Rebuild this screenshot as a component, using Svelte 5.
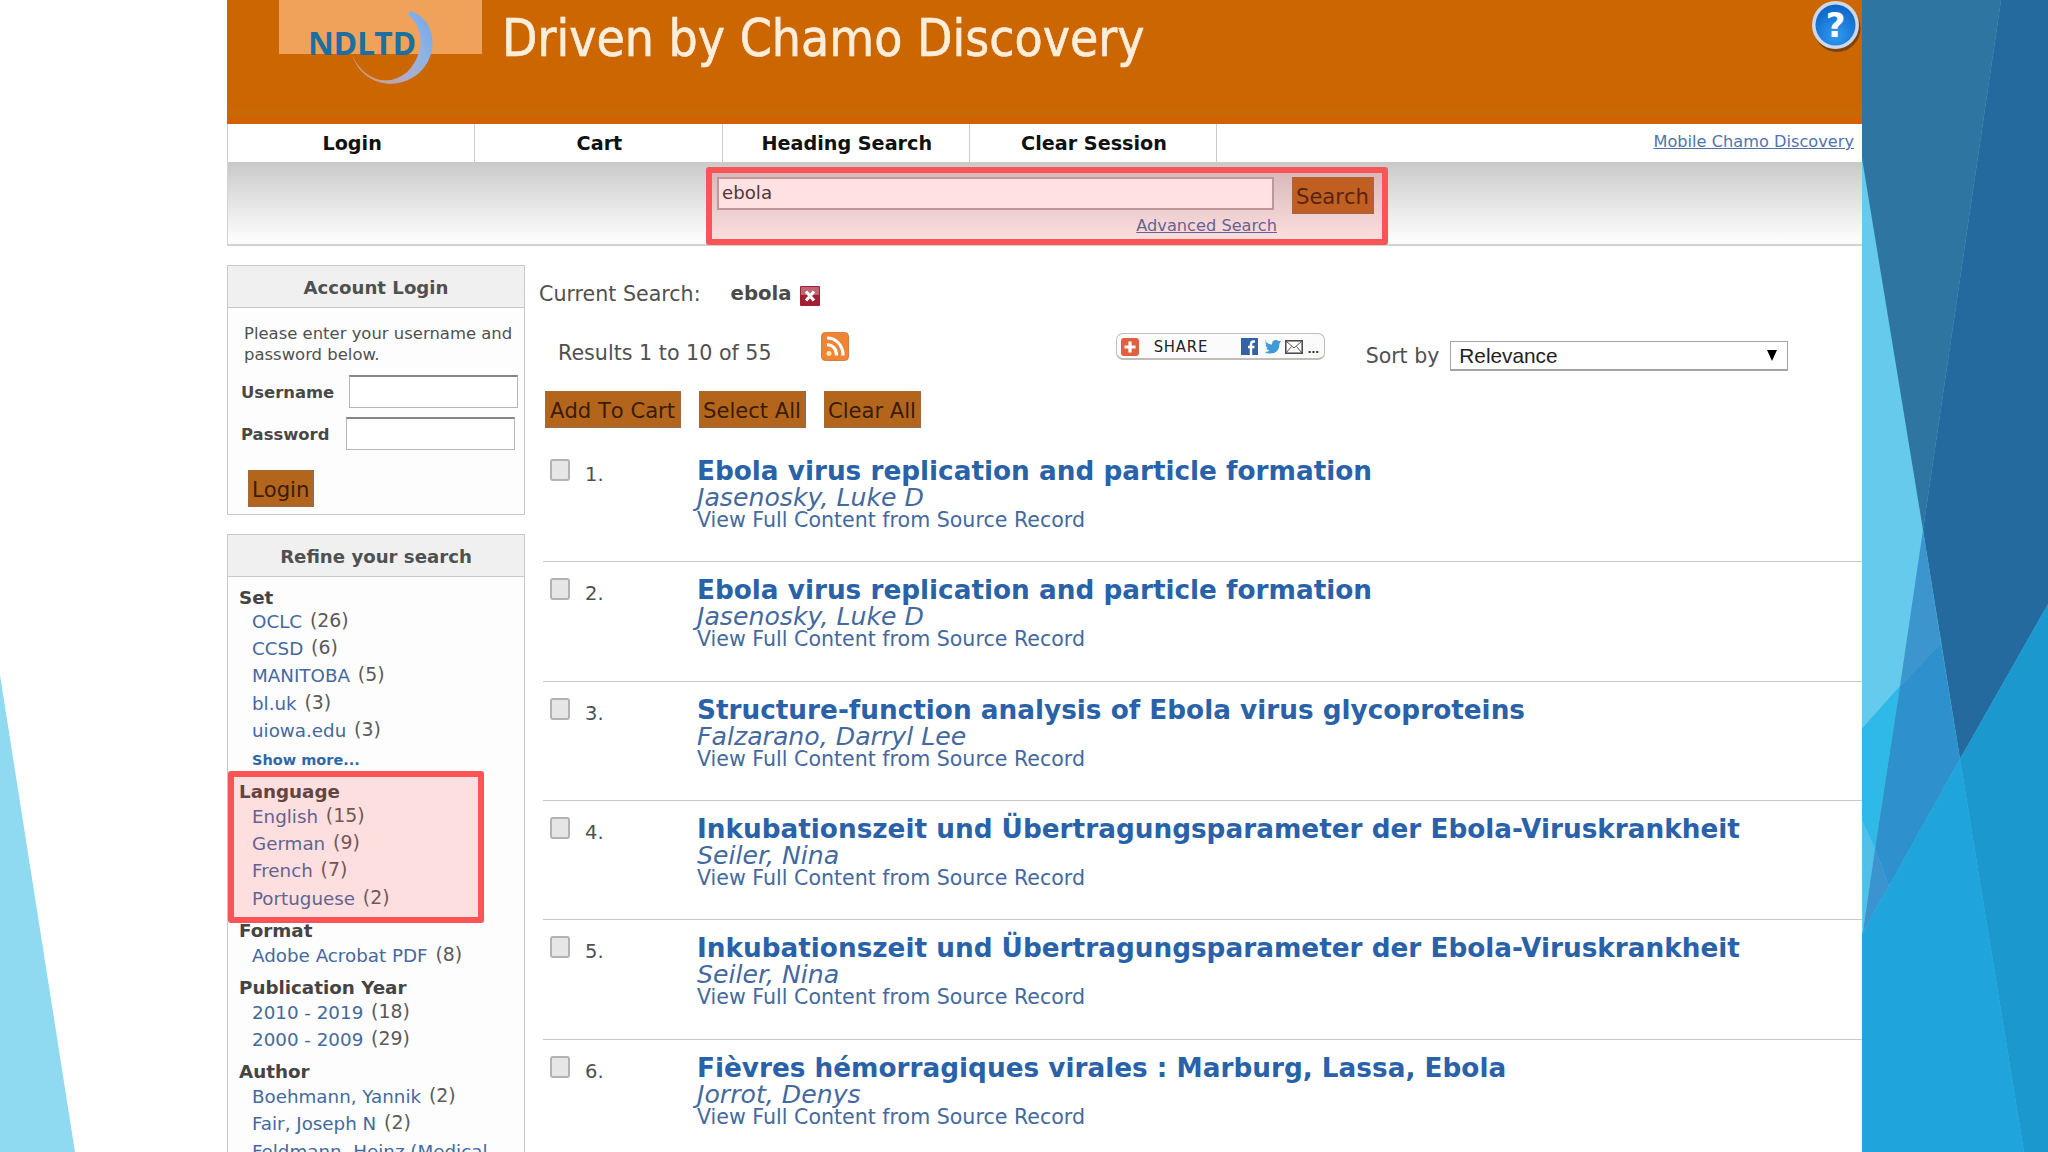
<script>
    const navItems = ['Login', 'Cart', 'Heading Search', 'Clear Session'];

    const facets = [
        {
            name: 'Set',
            more: true,
            values: [['OCLC', 26], ['CCSD', 6], ['MANITOBA', 5], ['bl.uk', 3], ['uiowa.edu', 3]]
        },
        {
            name: 'Language',
            values: [['English', 15], ['German', 9], ['French', 7], ['Portuguese', 2]]
        },
        { name: 'Format', values: [['Adobe Acrobat PDF', 8]] },
        { name: 'Publication Year', values: [['2010 - 2019', 18], ['2000 - 2009', 29]] },
        {
            name: 'Author',
            values: [['Boehmann, Yannik', 2], ['Fair, Joseph N', 2], ['Feldmann, Heinz (Medical', null]]
        }
    ];

    const results = [
        { title: 'Ebola virus replication and particle formation', author: 'Jasenosky, Luke D' },
        { title: 'Ebola virus replication and particle formation', author: 'Jasenosky, Luke D' },
        { title: 'Structure-function analysis of Ebola virus glycoproteins', author: 'Falzarano, Darryl Lee' },
        { title: 'Inkubationszeit und Übertragungsparameter der Ebola-Viruskrankheit', author: 'Seiler, Nina' },
        { title: 'Inkubationszeit und Übertragungsparameter der Ebola-Viruskrankheit', author: 'Seiler, Nina' },
        { title: 'Fièvres hémorragiques virales : Marburg, Lassa, Ebola', author: 'Jorrot, Denys' }
    ];

    let query = 'ebola';
</script>

<div class="slide">
    <svg class="backdrop" viewBox="0 0 2048 1152" aria-hidden="true">
        <path d="M0 675L75 1152H0z" fill="#8fdaf1" />
        <path d="M1862 0h186v1152h-186z" fill="#66caec" />
        <path d="M1862 0H2001L1923 530L1862 158z" fill="#2f75a1" />
        <path d="M2001 0H2048V604L1960 759L1923 530z" fill="#256a9f" />
        <path d="M1862 728.5L1900 686L1875 849L1862 820z" fill="#2fb9e8" />
        <path d="M1862 820L1875 849L1863 932z" fill="#50c0e8" />
        <path d="M1923 530L1941 643L1900 686z" fill="#3c95cd" />
        <path d="M1900 686L1941 643L1960 759L1889 886L1875 849z" fill="#2e91cd" />
        <path d="M1875 849L1889 886L1863 932z" fill="#3b93d0" />
        <path d="M1862 934L1960 759L2024 1152H1862z" fill="#1fa4dc" />
        <path d="M1960 759L2048 604V1152H2024z" fill="#1b98cd" />
    </svg>

    <div class="site">
        <header>
            <svg class="logo" width="277" height="124" viewBox="0 0 277 124">
                <defs>
                    <linearGradient id="swoosh" x1="0" y1=".8" x2="1" y2=".3">
                        <stop offset="0" stop-color="#d09a78" />
                        <stop offset=".45" stop-color="#b3abc6" />
                        <stop offset=".8" stop-color="#8db4e6" />
                        <stop offset="1" stop-color="#7aaae6" />
                    </linearGradient>
                </defs>
                <rect x="52" width="203" height="54" fill="#f0a25b" />
                <path d="M183 11C209 19 212 52 195 70C175 92 136 88 125 55C138 83 165 88 183 69C197 52 198 29 181 15z" fill="url(#swoosh)" />
                <text x="81" y="54.500" textLength="108" lengthAdjust="spacingAndGlyphs">NDLTD</text>
            </svg>
            <h1>Driven by Chamo Discovery</h1>
            <svg class="help" width="50" height="54" viewBox="0 0 50 54">
                <defs>
                    <radialGradient id="ball" cx=".5" cy=".75" r=".8">
                        <stop offset="0" stop-color="#2f9cf0" />
                        <stop offset="1" stop-color="#0b5fc4" />
                    </radialGradient>
                </defs>
                <ellipse cx="26" cy="28" rx="23.500" ry="24" fill="#5a3416" opacity=".7" />
                <ellipse cx="24.500" cy="25" rx="23.500" ry="24" fill="#cfd8ea" />
                <ellipse cx="24.500" cy="25" rx="20" ry="20.500" fill="url(#ball)" />
                <text x="24.500" y="37">?</text>
            </svg>
        </header>

        <nav>
            {#each navItems as item}
                <a href="#top">{item}</a>
            {/each}
            <a class="mobile" href="#top">Mobile Chamo Discovery</a>
        </nav>

        <div class="searchbar">
            <form>
                <div class="field">
                    <input type="text" bind:value={query} aria-label="Search terms">
                    <a href="#top">Advanced Search</a>
                </div>
                <button type="button" class="btn">Search</button>
            </form>
            <div class="mark mark-search"></div>
        </div>

        <div class="content">
            <aside>
                <section class="box login">
                    <h2>Account Login</h2>
                    <p>Please enter your username and password below.</p>
                    <label>Username <input type="text"></label>
                    <label>Password <input type="password"></label>
                    <button type="button" class="btn">Login</button>
                </section>

                <section class="box refine">
                    <h2>Refine your search</h2>
                    {#each facets as facet}
                        <h3>{facet.name}</h3>
                        <ul>
                            {#each facet.values as [label, count]}
                                <li><a href="#top">{label}</a>{#if count}&nbsp;<span>({count})</span>{/if}</li>
                            {/each}
                        </ul>
                        {#if facet.more}
                            <a class="more" href="#top">Show more...</a>
                        {/if}
                    {/each}
                    <div class="mark mark-language"></div>
                </section>
            </aside>

            <main>
                <div class="current">
                    <span>Current Search:</span>
                    <b>ebola</b>
                    <svg width="20" height="20" viewBox="0 0 20 20">
                        <rect width="20" height="20" rx="1" fill="#a31f33" />
                        <rect x="1" y="1" width="18" height="8" fill="#bd6571" />
                        <path d="M6 5.500l8 9M14 5.500l-8 9" stroke="#fff" stroke-width="3.200" />
                    </svg>
                </div>

                <div class="toolbar">
                    <span class="count">Results 1 to 10 of 55</span>
                    <svg class="rss" width="28" height="29" viewBox="0 0 28 31" preserveAspectRatio="none">
                        <rect x=".5" y=".5" width="27" height="30" rx="4" fill="#ee8434" stroke="#d9783a" />
                        <g fill="none" stroke="#fff" stroke-width="3.200">
                            <path d="M6 6.500C15 6.500 22 14 22 25" />
                            <path d="M6 13.500C11.500 13.500 15.500 18 15.500 25" />
                        </g>
                        <ellipse cx="8" cy="23" rx="2.500" ry="2.700" fill="#ffe9a8" />
                    </svg>
                    <div class="share">
                        <svg width="18" height="18" viewBox="0 0 18 18">
                            <rect width="18" height="18" rx="3" fill="#e2603f" />
                            <path d="M9 3.500v11M3.500 9h11" stroke="#fff" stroke-width="3.200" />
                        </svg>
                        <span>SHARE</span>
                        <svg class="networks" width="64" height="18" viewBox="0 0 64 18">
                            <rect width="17" height="17" fill="#3463a5" />
                            <path d="M14 3.500h-1.500q-2.500 0-2.500 2.800V17M7 9h6.500" fill="none" stroke="#fff" stroke-width="2.400" />
                            <path d="M23.500 2.500q3.500 4 7.500 4q0-4.500 4-4.500q1.500 0 2.500 1h2.500l-1.500 2.500q0 10-9.500 10q-3.500 0-5.500-1.500q3.500 0 5-1.500q-2.500-.5-3-2.500h1.500q-2.500-1-2.500-3.500l1.200.4q-2.200-2-.7-4.400z" fill="#3f9bd6" />
                            <rect x="44.800" y="2.800" width="16.400" height="12.400" fill="#fff" stroke="#444" stroke-width="1.500" />
                            <path d="M45 3l8 7l8-7M45 15l5.500-6.500M61 15l-5.500-6.500" fill="none" stroke="#555" />
                        </svg>
                        <i>...</i>
                    </div>
                    <span class="sort">Sort by</span>
                    <div class="select">
                        Relevance
                        <svg width="10" height="11" viewBox="0 0 10 11"><path d="M0 0h10L5 11z" /></svg>
                    </div>
                </div>

                <div class="actions">
                    <button type="button" class="btn">Add To Cart</button>
                    <button type="button" class="btn">Select All</button>
                    <button type="button" class="btn">Clear All</button>
                </div>

                <ol>
                    {#each results as result, i}
                        <li>
                            <span class="check"></span>
                            <span class="num">{i + 1}.</span>
                            <div class="record">
                                <a class="title" href="#top">{result.title}</a>
                                <a class="author" href="#top">{result.author}</a>
                                <a class="source" href="#top">View Full Content from Source Record</a>
                            </div>
                        </li>
                    {/each}
                </ol>
            </main>
        </div>
    </div>
</div>

<style>
    :global(body) {
        margin: 0;
        overflow: hidden;
    }

    .slide {
        position: relative;
        width: 2048px;
        height: 1152px;
        overflow: hidden;
        background: #fff;
        color: #505050;
        font-family: "DejaVu Sans", Verdana, sans-serif;
    }

    .slide * {
        box-sizing: border-box;
    }

    .backdrop {
        position: absolute;
        inset: 0;
    }

    .site {
        position: relative;
        width: 1635px;
        height: 1152px;
        margin-left: 227px;
        display: flex;
        flex-direction: column;
    }

    a {
        color: #44699f;
        text-decoration: none;
    }

    h1, h2, h3, p, ul, ol {
        margin: 0;
        padding: 0;
        list-style: none;
    }

    header {
        display: flex;
        height: 124px;
        flex: none;
        background: linear-gradient(#cc6600 110px, #c66a08 111px, #c66a08 115px, #d26200 117px);
    }

    .logo text {
        font: bold 33px "Noto Sans", "Open Sans", sans-serif;
        fill: #1d6f9f;
    }

    h1 {
        flex: 1;
        margin-left: -2px;
        font: 51.200px/77px "DejaVu Sans Condensed", "DejaVu Sans", sans-serif;
        color: #fdeedb;
        -webkit-text-stroke: .6px #fdeedb;
        white-space: nowrap;
    }

    .help {
        margin-right: 1px;
    }

    .help text {
        font: bold 34px "DejaVu Sans", sans-serif;
        fill: #fff;
        text-anchor: middle;
    }

    nav {
        display: flex;
        flex: none;
        height: 38px;
        background: #fff;
        border-left: 1px solid #ccc;
    }

    nav a {
        width: 247.300px;
        padding-left: 2px;
        border-right: 1px solid #ccc;
        color: #111;
        font-size: 19.200px;
        font-weight: bold;
        line-height: 39px;
        text-align: center;
    }

    nav a.mobile {
        flex: 1;
        border: 0;
        padding-right: 8px;
        color: #5272ae;
        font-size: 16.200px;
        font-weight: normal;
        line-height: 35px;
        text-align: right;
        text-decoration: underline;
    }

    .searchbar {
        position: relative;
        flex: none;
        height: 84px;
        padding: 15px 0 0 489px;
        background: linear-gradient(#c9c9c9, #d0d0d0 12%, #fbfbfb 92%);
        border: solid #d2d2d2;
        border-width: 0 0 2px 1px;
    }

    form {
        display: flex;
        gap: 18px;
    }

    .field {
        width: 557px;
        display: flex;
        flex-direction: column;
    }

    .field input {
        height: 33px;
        padding: 0 3px 3px;
        border: 2px solid #b0a8a8;
        background: #fff;
        color: #333;
        font: 18.200px "DejaVu Sans", sans-serif;
    }

    .field a {
        align-self: flex-end;
        margin-right: -3px;
        font-size: 16.200px;
        line-height: 32px;
        color: #4a68a4;
        text-decoration: underline;
    }

    .btn {
        flex: none;
        height: 37px;
        padding: 2px 3px 0;
        border: 1px solid #a2683a;
        border-width: 1px 2px 2px 1px;
        background: #b3651b;
        color: #3a1c08;
        font: 21.100px/34px "DejaVu Sans", sans-serif;
        font-kerning: none;
        white-space: nowrap;
    }

    .mark {
        position: absolute;
        border: 6px solid #fb5457;
        border-radius: 3px;
        background: rgba(255, 70, 70, .16);
    }

    .mark-search {
        left: 478px;
        top: 5px;
        width: 682px;
        height: 78px;
    }

    .mark-language {
        left: 0;
        top: 236px;
        width: 256px;
        height: 152px;
    }

    .content {
        flex: 1;
        min-height: 0;
        display: flex;
    }

    aside {
        width: 298px;
        padding-top: 19px;
        display: flex;
        flex-direction: column;
        gap: 19px;
    }

    .box {
        border: 1px solid #c8c8c8;
        background: #fdfdfd;
    }

    .box h2 {
        height: 42px;
        border-bottom: 1px solid #c8c8c8;
        background: #f0f0f0;
        color: #505050;
        font-size: 18.150px;
        line-height: 44px;
        text-align: center;
    }

    .login {
        flex: none;
        height: 250px;
    }

    .login p {
        margin: 16px 0 8px;
        padding-left: 16px;
        font-size: 16.450px;
        line-height: 20.500px;
    }

    .login label {
        display: flex;
        gap: 15px;
        height: 42px;
        padding: 2px 0 0 13px;
        font-size: 16.400px;
        font-weight: bold;
        line-height: 35px;
        color: #484848;
    }

    .login label + label {
        gap: 17px;
    }

    .login input {
        width: 169px;
        height: 33px;
        border: 1px solid #b5b5b5;
        border-top: 2px solid #858585;
        background: #fff;
    }

    .login .btn {
        margin: 13px 0 0 20px;
    }

    .refine {
        position: relative;
        flex: 1;
        min-height: 0;
        border-bottom: 0;
    }

    .refine h3 {
        margin: 6.700px 0 -1.200px;
        padding-left: 11px;
        color: #444;
        font-size: 18.300px;
        line-height: 24px;
    }

    .refine h2 + h3 {
        margin: 9px 0 -2.500px;
    }

    .refine li {
        padding-left: 24px;
        font-size: 18.300px;
        line-height: 27.400px;
        white-space: nowrap;
    }

    .refine span {
        position: relative;
        top: -1px;
        margin-left: 2px;
        font-size: 18.900px;
        line-height: 20px;
        color: #5a5a5a;
    }

    .more {
        display: block;
        margin: 2px 0 -.500px;
        padding-left: 24px;
        color: #2f68a8;
        font-size: 14.500px;
        font-weight: bold;
        line-height: 27px;
    }

    main {
        flex: 1;
        padding: 28px 0 0 14px;
    }

    .current {
        display: flex;
        height: 40px;
        font-size: 20.600px;
        line-height: 40px;
    }

    .current b {
        margin: 0 8px 0 30px;
        font-size: 19.700px;
        color: #4a4a4a;
    }

    .current svg {
        margin-top: 12px;
    }

    .toolbar {
        display: flex;
        height: 60px;
        padding-left: 19px;
        font-size: 20.650px;
    }

    .count {
        margin-top: 25px;
        line-height: 28px;
    }

    .rss {
        margin: 18px 0 0 49px;
    }

    .share {
        display: flex;
        align-items: flex-start;
        width: 209px;
        height: 27px;
        margin: 19px 0 0 267px;
        padding: 4px 0 0 4px;
        border: 1px solid #c0bdb8;
        border-bottom-width: 2px;
        border-radius: 7px;
        background: #fbfbfb;
        color: #222;
    }

    .share span {
        margin-left: 15px;
        font: 16.500px/18px "DejaVu Sans Condensed", "DejaVu Sans", sans-serif;
        letter-spacing: .8px;
    }

    .networks {
        margin-left: auto;
    }

    .share i {
        width: 19px;
        padding-left: 3px;
        font: bold 10px/23px "DejaVu Sans", sans-serif;
    }

    .sort {
        margin: 28px 11px 0 41px;
        font-size: 20.500px;
        line-height: 29px;
    }

    .select {
        display: flex;
        align-items: center;
        justify-content: space-between;
        width: 338px;
        height: 30px;
        margin-top: 27px;
        padding: 0 10px 0 8px;
        border: 1px solid #a4a4a4;
        border-bottom-width: 2px;
        background: #fff;
        color: #222;
        font: 20.800px "Liberation Sans", Arial, sans-serif;
    }

    .actions {
        display: flex;
        gap: 18px;
        margin: 17px 0 15px 6px;
    }

    .actions .btn:first-child {
        padding: 2px 4px 0;
    }

    ol {
        margin-left: 4px;
    }

    ol li {
        display: flex;
        height: 119.350px;
        border-bottom: 1px solid #c9c9c9;
    }

    .check {
        width: 20px;
        height: 22px;
        margin: 16px 15px 0 7px;
        border: 2px solid #b3b3b3;
        border-radius: 3px;
        background: #e6e6e6;
    }

    .num {
        width: 112px;
        margin-top: 20px;
        font-size: 19.500px;
        line-height: 24px;
    }

    .record {
        display: flex;
        flex-direction: column;
        padding-top: 13px;
        white-space: nowrap;
    }

    .title {
        color: #2962a8;
        font-size: 26.300px;
        font-weight: bold;
        line-height: 30px;
    }

    .author {
        font-size: 25.200px;
        font-style: italic;
        line-height: 24px;
    }

    .source {
        font-size: 20.570px;
        line-height: 20px;
    }
</style>
